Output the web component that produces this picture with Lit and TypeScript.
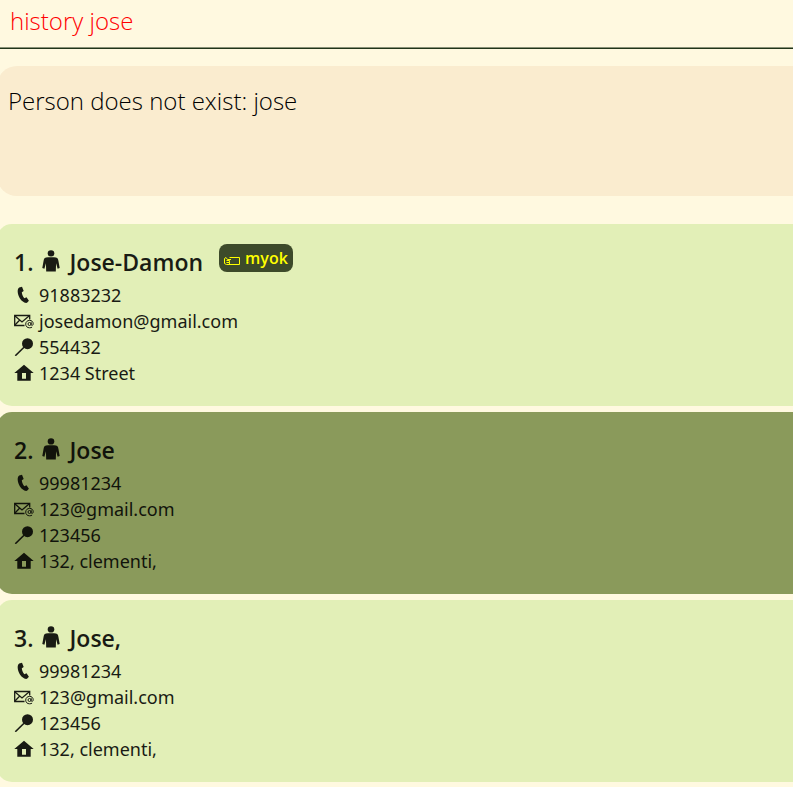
import { LitElement, html, css, svg } from "lit";
import { customElement, property } from "lit/decorators.js";

interface Person {
  name: string;
  phone: string;
  email: string;
  postcode: string;
  address: string;
  tags: string[];
}

const people: Person[] = [
  { name: "Jose-Damon", phone: "91883232", email: "josedamon@gmail.com", postcode: "554432", address: "1234 Street", tags: ["myok"] },
  { name: "Jose", phone: "99981234", email: "123@gmail.com", postcode: "123456", address: "132, clementi,", tags: [] },
  { name: "Jose,", phone: "99981234", email: "123@gmail.com", postcode: "123456", address: "132, clementi,", tags: [] },
];

const shapes = {
  phone: svg`<path d="M5.200 1.600 8 .8l1.700 4.200-1.900 1.300c.2 2.400 1.100 4.400 2.600 5.900l2.100-1 2.400 3.500-1.600 1.900c-.8.5-2 .3-3-.2C6.600 14.600 4.200 10.600 3.700 6c-.1-1.900.300-3.600 1.500-4.400z" fill="currentColor"/>`,
  email: svg`<g fill="none" stroke="currentColor"><path d="M10.500 13.500H.7v-10h15v4" stroke-width="1.300"/><path d="m1 4 7 6 7-6M1 13l4.500-4.800" stroke-width="1.300"/><circle cx="15.500" cy="12" r="1.500"/><path d="M17.200 10.200v2.600c.3 1.200 2 .6 2-1 0-2.200-1.600-3.400-3.600-3.400-2.300 0-3.900 1.600-3.900 3.700 0 2.300 1.600 3.700 3.900 3.700 1 0 1.800-.2 2.500-.7"/></g>`,
  pin: svg`<path d="M1.300 17.700 10 9.200" stroke="currentColor" stroke-width="1.600"/><circle cx="13.500" cy="5.700" r="5.500" fill="currentColor"/>`,
  home: svg`<path fill="currentColor" fill-rule="evenodd" d="M10 .8 19.700 9H16.700v7.800H3.300V9H.3zM8 9v5.700h4V9z"/>`,
};

@customElement("person-card")
class PersonCard extends LitElement {
  @property({ attribute: false }) person!: Person;
  @property({ type: Number }) index = 1;
  @property({ type: Boolean, reflect: true }) alternate = false;

  static styles = css`
    :host {
      display: block;
      box-sizing: border-box;
      padding: 22px 17px 20px;
      border-radius: 15px;
      background: #e2efb7;
      color: #191b14;
      font-size: 18px;
      line-height: 26px;
    }
    :host([alternate]) { background: #8a9a5b; color: #11130b; }
    .head { display: flex; align-items: flex-start; height: 36px; }
    h2 {
      display: flex;
      align-items: center;
      margin: 0;
      font-size: 23px;
      line-height: 32px;
      font-weight: 600;
    }
    .person { width: 18px; height: 22px; margin: 0 9px 2px; }
    .tag {
      display: flex;
      align-items: center;
      box-sizing: border-box;
      height: 28px;
      margin: -2px 0 0 16px;
      padding: 0 5px;
      gap: 4px;
      border-radius: 8px;
      background: #3d4a2a;
      color: #ffff00;
      font-size: 16px;
      font-weight: 600;
    }
    .tag svg { width: 17px; height: 12px; margin-top: 6px; }
    ul { list-style: none; margin: 0; padding: 0; font-family: "Noto Sans", "Open Sans", sans-serif; }
    li { display: flex; align-items: center; gap: 5px; }
    li svg { width: 20px; height: 18px; }
  `;

  private row(shape: unknown, text: string) {
    return html`<li><svg viewBox="0 0 20 18" aria-hidden="true">${shape}</svg><span>${text}</span></li>`;
  }

  render() {
    const p = this.person;
    return html`
      <div class="head">
        <h2>
          <span>${this.index}.</span>
          <svg class="person" viewBox="0 0 18 22" fill="currentColor" aria-hidden="true">
            <ellipse cx="9" cy="3.400" rx="3.300" ry="3.100" />
            <path d="M6 7.300h6c3 0 4 1 4.400 3.400L17.700 18l-2.100.7-1.500-5.500-.3 8.300H4.200l-.3-8.300-1.500 5.500L.3 18l1.300-7.300C2 8.300 3 7.300 6 7.300z" />
          </svg>
          <span>${p.name}</span>
        </h2>
        ${p.tags.map((t) => html`<span class="tag">
          <svg viewBox="0 0 17 12" fill="none" stroke="currentColor" aria-hidden="true">
            <path d="M5.500 2.500h10v7h-10M7 4.500H3.500L2 2.500.500 3.500v5l2 1h4M2.500 5.500h3v2h-3M5.500 7.500v2" />
          </svg>${t}</span>`)}
      </div>
      <ul>
        ${this.row(shapes.phone, p.phone)}
        ${this.row(shapes.email, p.email)}
        ${this.row(shapes.pin, p.postcode)}
        ${this.row(shapes.home, p.address)}
      </ul>
    `;
  }
}

@customElement("app-root")
class AppRoot extends LitElement {
  static styles = css`
    :host {
      display: block;
      box-sizing: border-box;
      min-height: 100vh;
      overflow: hidden;
      background: #fff9e0;
      font-family: "Open Sans", "Noto Sans", sans-serif;
    }
    input, textarea {
      display: block;
      box-sizing: border-box;
      border: 0;
      outline: 0;
      font-family: inherit;
      font-size: 24px;
      line-height: 32px;
      font-weight: 300;
    }
    .command {
      width: 100%;
      height: 49px;
      padding: 0 10px 8px;
      border-bottom: 1px solid #20351a;
      box-shadow: inset 0 -1px #8a9277;
      background: transparent;
      color: #ff0000;
    }
    .panel { margin: 17px -20px 0 -3px; }
    .result {
      width: 100%;
      height: 130px;
      padding: 19px 11px;
      border-radius: 20px;
      background: #faeccf;
      color: #000;
      resize: none;
    }
    .list { display: grid; gap: 6px; margin: 28px -20px 5px -3px; }
  `;

  render() {
    return html`
      <input class="command" type="text" aria-label="Command" value="history jose" spellcheck="false" />
      <div class="panel">
        <textarea class="result" aria-label="Result" readonly spellcheck="false" .value=${"Person does not exist: jose"}></textarea>
      </div>
      <main class="list">
        ${people.map((p, i) => html`<person-card .person=${p} .index=${i + 1} ?alternate=${i % 2 === 1}></person-card>`)}
      </main>
    `;
  }
}
